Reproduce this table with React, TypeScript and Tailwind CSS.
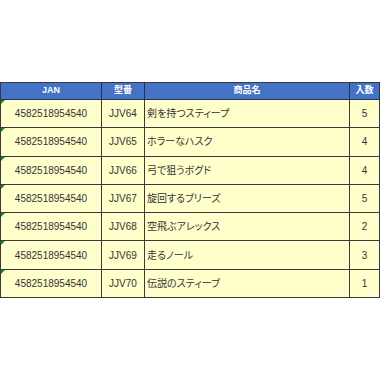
import React from "react";

const rows = [
  ["4582518954540", "JJV64", "剣を持つスティープ", "5"],
  ["4582518954540", "JJV65", "ホラーなハスク", "4"],
  ["4582518954540", "JJV66", "弓で狙うボグド", "4"],
  ["4582518954540", "JJV67", "旋回するブリーズ", "5"],
  ["4582518954540", "JJV68", "空飛ぶアレックス", "2"],
  ["4582518954540", "JJV69", "走るノール", "3"],
  ["4582518954540", "JJV70", "伝説のスティーブ", "1"],
];

const font = "font-['Tahoma','Liberation_Sans','Noto_Sans_CJK_JP',sans-serif]";

export default function App() {
  return (
    <div className="w-[380px] h-[380px] bg-white pt-[82px]">
      <div className={`w-[380px] border-l border-t border-[#3a3a3a] ${font}`}>
        <div className="flex h-[17px] bg-[#4472c4] text-white text-[9px] font-bold">
          <div className="w-[101px] border-r border-b border-[#1f2f55] flex items-center justify-center">JAN</div>
          <div className="w-[43px] border-r border-b border-[#1f2f55] flex items-center justify-center">型番</div>
          <div className="w-[205px] border-r border-b border-[#1f2f55] flex items-center justify-center">商品名</div>
          <div className="w-[30px] border-r border-b border-[#1f2f55] flex items-center justify-center">入数</div>
        </div>
        {rows.map((r, i) => (
          <div key={i} className="flex h-[28.3px] bg-[#ffffcc] text-[10px] text-[#333333]">
            <div className="relative w-[101px] border-r border-b border-[#3a3a3a] flex items-center justify-center">
              <span className="absolute left-0 top-0 w-0 h-0 border-t-[4px] border-r-[4px] border-t-[#1a8a1a] border-r-transparent" />
              {r[0]}
            </div>
            <div className="w-[43px] border-r border-b border-[#3a3a3a] flex items-center justify-center">{r[1]}</div>
            <div className="w-[205px] border-r border-b border-[#3a3a3a] flex items-center pl-[2px] [font-feature-settings:'palt']">{r[2]}</div>
            <div className="w-[30px] border-r border-b border-[#3a3a3a] flex items-center justify-center">{r[3]}</div>
          </div>
        ))}
      </div>
    </div>
  );
}
